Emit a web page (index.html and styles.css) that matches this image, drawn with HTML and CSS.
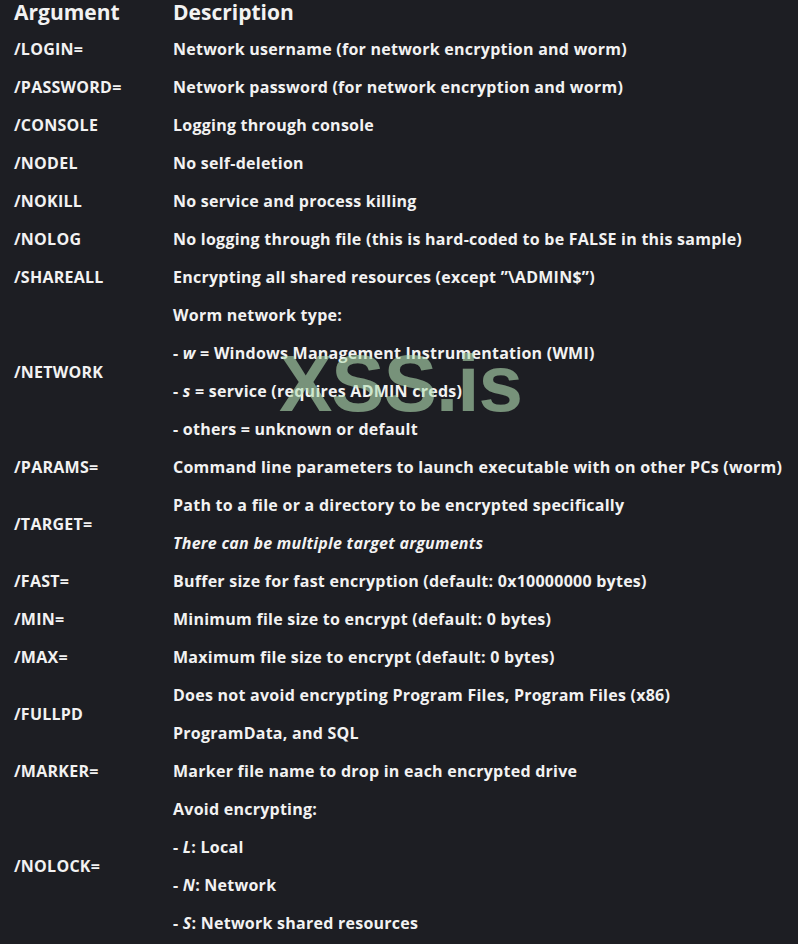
FILE: index.html
```html
<!DOCTYPE html>
<html lang="en">
<head>
<meta charset="utf-8">
<title>Arguments</title>
<link rel="stylesheet" href="styles.css">
</head>
<body>
<div class="page">
  <table class="args">
    <thead>
      <tr><th class="c1">Argument</th><th class="c2">Description</th></tr>
    </thead>
    <tbody>
      <tr><td>/LOGIN=</td><td><p>Network username (for network encryption and worm)</p></td></tr>
      <tr><td>/PASSWORD=</td><td><p>Network password (for network encryption and worm)</p></td></tr>
      <tr><td>/CONSOLE</td><td><p>Logging through console</p></td></tr>
      <tr><td>/NODEL</td><td><p>No self-deletion</p></td></tr>
      <tr><td>/NOKILL</td><td><p>No service and process killing</p></td></tr>
      <tr><td>/NOLOG</td><td><p>No logging through file (this is hard-coded to be FALSE in this sample)</p></td></tr>
      <tr><td>/SHAREALL</td><td><p>Encrypting all shared resources (except ”\ADMIN$”)</p></td></tr>
      <tr><td>/NETWORK</td><td>
        <p>Worm network type:</p>
        <p>- <em>w</em> = Windows Management Instrumentation (WMI)</p>
        <p>- <em>s</em> = service (requires ADMIN creds)</p>
        <p>- others = unknown or default</p>
      </td></tr>
      <tr><td>/PARAMS=</td><td><p>Command line parameters to launch executable with on other PCs (worm)</p></td></tr>
      <tr><td>/TARGET=</td><td>
        <p>Path to a file or a directory to be encrypted specifically</p>
        <p><em>There can be multiple target arguments</em></p>
      </td></tr>
      <tr><td>/FAST=</td><td><p>Buffer size for fast encryption (default: 0x10000000 bytes)</p></td></tr>
      <tr><td>/MIN=</td><td><p>Minimum file size to encrypt (default: 0 bytes)</p></td></tr>
      <tr><td>/MAX=</td><td><p>Maximum file size to encrypt (default: 0 bytes)</p></td></tr>
      <tr><td>/FULLPD</td><td>
        <p>Does not avoid encrypting Program Files, Program Files (x86)</p>
        <p>ProgramData, and SQL</p>
      </td></tr>
      <tr><td>/MARKER=</td><td><p>Marker file name to drop in each encrypted drive</p></td></tr>
      <tr><td>/NOLOCK=</td><td>
        <p>Avoid encrypting:</p>
        <p>- <em>L</em>: Local</p>
        <p>- <em>N</em>: Network</p>
        <p>- <em>S</em>: Network shared resources</p>
      </td></tr>
    </tbody>
  </table>
  <div class="watermark">XSS.is</div>
</div>
</body>
</html>
```
FILE: styles.css
```css
html, body {
  margin: 0;
  padding: 0;
  background: #1d1e23;
}
.page {
  position: relative;
  width: 798px;
  height: 944px;
  overflow: hidden;
  background: #1d1e23;
  color: #f2f2f2;
  font-family: "Open Sans", "DejaVu Sans", sans-serif;
  font-weight: 700;
}
.args {
  border-collapse: collapse;
  margin-left: 14px;
}
.args th {
  text-align: left;
  font-size: 21px;
  font-weight: 700;
  line-height: 24px;
  padding: 0 0 6px 0;
}
.args th.c1 {
  width: 159px;
}
.args td {
  vertical-align: middle;
  padding: 0;
  font-size: 16px;
  letter-spacing: 0.25px;
  white-space: nowrap;
}
.args td p {
  margin: 0;
  line-height: 38px;
  height: 38px;
}
.args em {
  font-style: italic;
}
.watermark {
  position: absolute;
  left: 279px;
  top: 339px;
  font-family: "Liberation Sans", Arial, sans-serif;
  font-weight: 700;
  font-size: 80px;
  line-height: 90px;
  letter-spacing: -1px;
  color: rgba(180, 224, 180, 0.6);
  pointer-events: none;
}
```
